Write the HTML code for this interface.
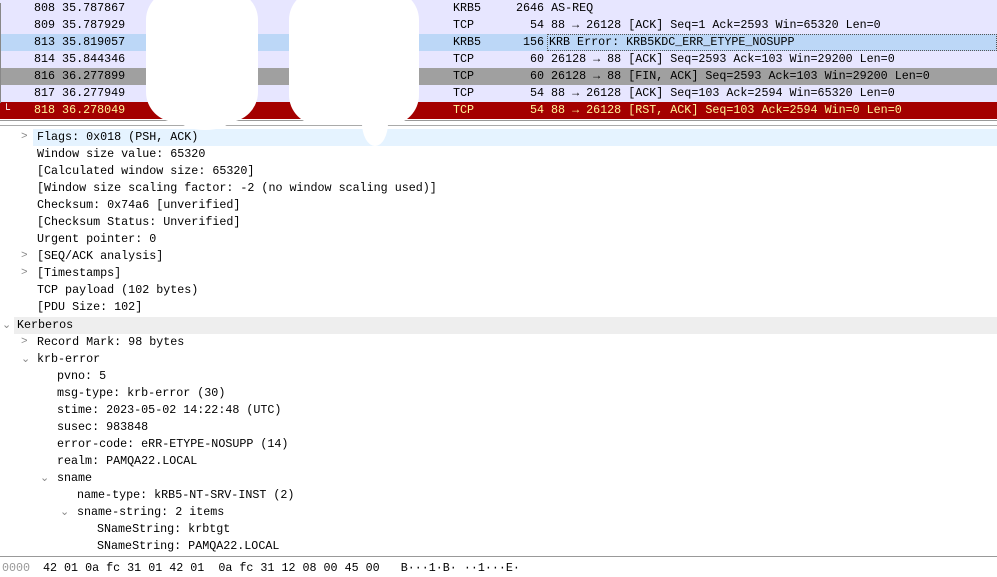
<!DOCTYPE html>
<html><head><meta charset="utf-8"><style>
body{margin:0;width:997px;height:575px;overflow:hidden;background:#fff;font-family:"Liberation Mono",monospace;font-size:11.7px;color:#000;position:relative}
.r{position:absolute;left:0;width:997px;height:17px;line-height:17px;white-space:pre}
.r span{position:absolute}
.d{position:absolute;height:17px;line-height:17px;white-space:pre}
.a{position:absolute;color:#888;font-size:11px}
.blob{position:absolute;background:#fff}
</style></head><body>
<div class="r" style="top:0;background:#e7e6ff"><span style="left:34px">808 35.787867</span><span style="left:453px">KRB5</span><span style="left:516px">2646 AS-REQ</span></div>
<div class="r" style="top:17px;background:#e7e6ff"><span style="left:34px">809 35.787929</span><span style="left:453px">TCP</span><span style="left:530px">54 88 → 26128 [ACK] Seq=1 Ack=2593 Win=65320 Len=0</span></div>
<div class="r" style="top:34px;background:#bcd7f7"><span style="left:34px">813 35.819057</span><span style="left:453px">KRB5</span><span style="left:523px">156</span><span style="left:547px;right:0;border:1px dotted #555;height:15px;line-height:15px;padding-left:1px">KRB Error: KRB5KDC_ERR_ETYPE_NOSUPP</span></div>
<div class="r" style="top:51px;background:#e7e6ff"><span style="left:34px">814 35.844346</span><span style="left:453px">TCP</span><span style="left:530px">60 26128 → 88 [ACK] Seq=2593 Ack=103 Win=29200 Len=0</span></div>
<div class="r" style="top:68px;background:#a0a0a0"><span style="left:34px">816 36.277899</span><span style="left:453px">TCP</span><span style="left:530px">60 26128 → 88 [FIN, ACK] Seq=2593 Ack=103 Win=29200 Len=0</span></div>
<div class="r" style="top:85px;background:#e7e6ff"><span style="left:34px">817 36.277949</span><span style="left:453px">TCP</span><span style="left:530px">54 88 → 26128 [ACK] Seq=103 Ack=2594 Win=65320 Len=0</span></div>
<div class="r" style="top:102px;background:#a40000;color:#fff59a"><span style="left:3px;color:#fff">└</span><span style="left:34px">818 36.278049</span><span style="left:453px">TCP</span><span style="left:530px">54 88 → 26128 [RST, ACK] Seq=103 Ack=2594 Win=0 Len=0</span></div>
<div style="position:absolute;left:0;top:3px;width:1px;height:100px;background:#888"></div>
<div style="position:absolute;left:0;top:120px;width:997px;height:1px;background:#999"></div>
<div style="position:absolute;left:0;top:125px;width:997px;height:1px;background:#aaa"></div>
<div style="position:absolute;left:33px;top:129px;width:964px;height:17px;background:#e5f3ff"></div>
<div style="position:absolute;left:14px;top:317px;width:983px;height:17px;background:#eeeeee"></div>
<div class="d" style="top:129px;left:37px">Flags: 0x018 (PSH, ACK)</div><div class="a" style="top:131px;left:21px">&gt;</div>
<div class="d" style="top:146px;left:37px">Window size value: 65320</div>
<div class="d" style="top:163px;left:37px">[Calculated window size: 65320]</div>
<div class="d" style="top:180px;left:37px">[Window size scaling factor: -2 (no window scaling used)]</div>
<div class="d" style="top:197px;left:37px">Checksum: 0x74a6 [unverified]</div>
<div class="d" style="top:214px;left:37px">[Checksum Status: Unverified]</div>
<div class="d" style="top:231px;left:37px">Urgent pointer: 0</div>
<div class="d" style="top:248px;left:37px">[SEQ/ACK analysis]</div><div class="a" style="top:250px;left:21px">&gt;</div>
<div class="d" style="top:265px;left:37px">[Timestamps]</div><div class="a" style="top:267px;left:21px">&gt;</div>
<div class="d" style="top:282px;left:37px">TCP payload (102 bytes)</div>
<div class="d" style="top:299px;left:37px">[PDU Size: 102]</div>
<div class="d" style="top:317px;left:17px">Kerberos</div><div class="a" style="top:318px;left:2px">⌄</div>
<div class="d" style="top:334px;left:37px">Record Mark: 98 bytes</div><div class="a" style="top:336px;left:21px">&gt;</div>
<div class="d" style="top:351px;left:37px">krb-error</div><div class="a" style="top:352px;left:21px">⌄</div>
<div class="d" style="top:368px;left:57px">pvno: 5</div>
<div class="d" style="top:385px;left:57px">msg-type: krb-error (30)</div>
<div class="d" style="top:402px;left:57px">stime: 2023-05-02 14:22:48 (UTC)</div>
<div class="d" style="top:419px;left:57px">susec: 983848</div>
<div class="d" style="top:436px;left:57px">error-code: eRR-ETYPE-NOSUPP (14)</div>
<div class="d" style="top:453px;left:57px">realm: PAMQA22.LOCAL</div>
<div class="d" style="top:470px;left:57px">sname</div><div class="a" style="top:471px;left:40px">⌄</div>
<div class="d" style="top:487px;left:77px">name-type: kRB5-NT-SRV-INST (2)</div>
<div class="d" style="top:504px;left:77px">sname-string: 2 items</div><div class="a" style="top:505px;left:60px">⌄</div>
<div class="d" style="top:521px;left:97px">SNameString: krbtgt</div>
<div class="d" style="top:538px;left:97px">SNameString: PAMQA22.LOCAL</div>
<div style="position:absolute;left:0;top:556px;width:997px;height:1px;background:#999"></div>
<div class="d" style="top:560px;left:2px;color:#999">0000</div>
<div class="d" style="top:560px;left:43px">42 01 0a fc 31 01 42 01  0a fc 31 12 08 00 45 00   B···1·B· ··1···E·</div>
<div class="blob" style="left:146px;top:-10px;width:112px;height:132px;border-radius:30px"></div>
<div class="blob" style="left:180px;top:110px;width:50px;height:20px;border-radius:50%"></div>
<div class="blob" style="left:289px;top:-10px;width:130px;height:135px;border-radius:30px"></div>
<div class="blob" style="left:362px;top:100px;width:26px;height:46px;border-radius:50%"></div>
</body></html>
